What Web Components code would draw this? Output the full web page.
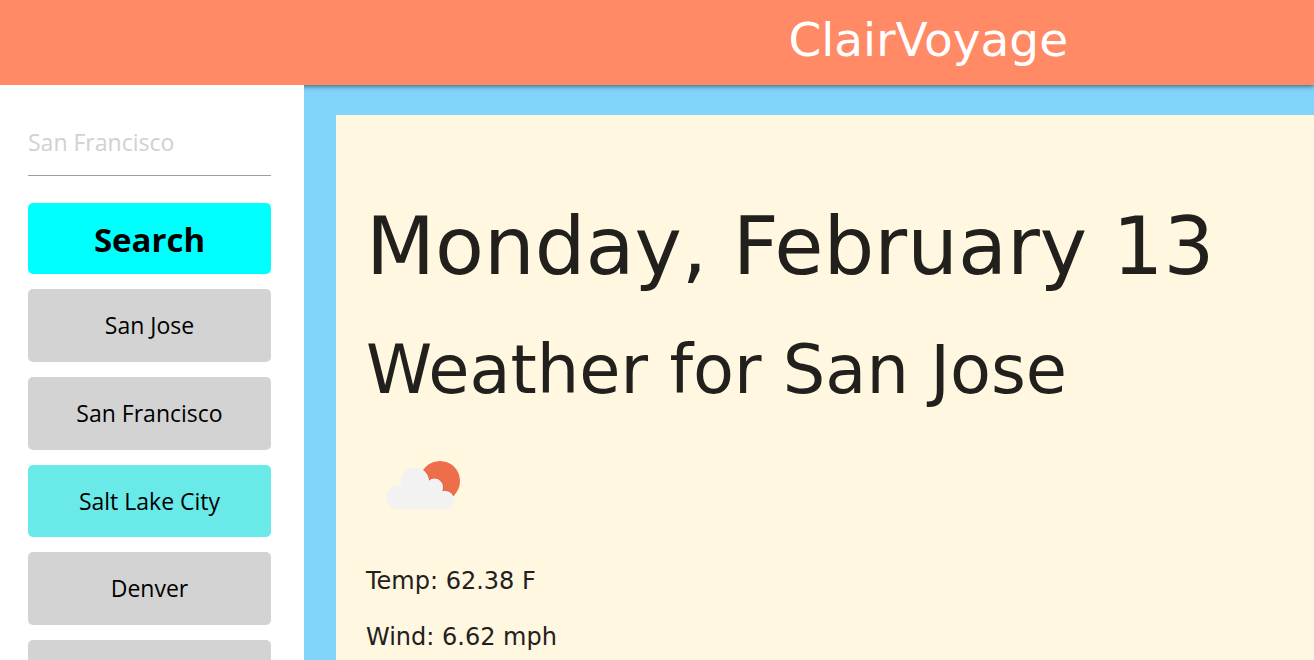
<!DOCTYPE html>
<html lang="en">
<head>
<meta charset="utf-8">
<meta name="viewport" content="width=device-width, initial-scale=1">
<title>ClairVoyage</title>
<style>
body { margin: 0; font-family: Verdana, "DejaVu Sans", sans-serif; color: #21201c; }
</style>
</head>
<body>
<voyage-app>
  <site-header slot="header">ClairVoyage</site-header>
  <city-sidebar slot="sidebar">
    <city-button>San Jose</city-button>
    <city-button>San Francisco</city-button>
    <city-button active>Salt Lake City</city-button>
    <city-button>Denver</city-button>
    <city-button label="Next city"></city-button>
  </city-sidebar>
  <weather-card>
    <span slot="date">Monday, February 13</span>
    <span slot="place">Weather for San Jose</span>
    <cloud-icon slot="icon"></cloud-icon>
    <weather-fact>Temp: 62.38 F</weather-fact>
    <weather-fact>Wind: 6.62 mph</weather-fact>
  </weather-card>
</voyage-app>
<script>
function define(name, html, setup) {
  customElements.define(name, class extends HTMLElement {
    connectedCallback() {
      if (this.shadowRoot) return;
      this.attachShadow({ mode: "open" }).innerHTML = html;
      if (setup) setup(this);
    }
  });
}

define("voyage-app", `
  <style>
    :host { display: flex; flex-direction: column; height: 100vh; overflow: hidden; }
    .body { display: grid; grid-template-columns: 304px 1fr; flex: 1; min-height: 0; }
    main { background: #81d4fa; padding: 30px 0 0 32px; display: flex; min-width: 0; min-height: 0; }
    ::slotted(weather-card) { flex: 1; }
  </style>
  <slot name="header"></slot>
  <div class="body">
    <slot name="sidebar"></slot>
    <main><slot></slot></main>
  </div>`);

define("site-header", `
  <style>
    :host { display: block; background: #ff8a65; color: #fff; padding: 8px 0 13px 60%; box-sizing: border-box;
      box-shadow: 0 2px 5px 0 rgba(0,0,0,.3), 0 1px 3px 0 rgba(0,0,0,.25); position: relative; }
    h1 { margin: 0; font-size: 47px; line-height: 64px; font-weight: 400; }
  </style>
  <header><h1><slot></slot></h1></header>`);

define("city-sidebar", `
  <style>
    :host { display: block; position: relative; background: #fff; padding: 36px 33px 0 28px; min-height: 0;
      font-family: "Segoe UI", "Open Sans", sans-serif; }
    form { display: flex; flex-direction: column; gap: 27px; margin: 0 0 15px; }
    input { display: block; width: 100%; height: 55px; box-sizing: border-box; padding: 0 0 12px; border: 0;
      border-bottom: 1px solid #9e9e9e; background: transparent; font: inherit; font-size: 23px; outline: 0; }
    input::placeholder { color: #d1d1d1; opacity: 1; }
    button { height: 71px; border: 0; border-radius: 5px; background: #0ff; color: #000; padding: 2px 0 0;
      font: inherit; font-size: 33px; font-weight: 700; }
    nav { display: flex; flex-direction: column; gap: 15px; }
  </style>
  <form>
    <input type="text" aria-label="City" placeholder="San Francisco">
    <button type="button">Search</button>
  </form>
  <nav><slot></slot></nav>`);

define("city-button", `
  <style>
    :host { display: block; }
    button { display: block; width: 100%; height: 73px; border: 0; border-radius: 5px; padding: 0 0 1px;
      background: #d3d3d3; color: #000; font: inherit; font-size: 23px; }
    :host([active]) button { background: #69eae8; height: 72px; }
  </style>
  <button type="button"><slot></slot></button>`, el => {
    const label = el.getAttribute("label");
    if (label) el.shadowRoot.querySelector("button").setAttribute("aria-label", label);
  });

define("weather-card", `
  <style>
    :host { display: block; background: #fff7e0; padding: 84px 0 0 30px; box-sizing: border-box; white-space: nowrap; }
    h2, h3 { margin: 0; font-weight: 400; }
    h2 { font-size: 80px; line-height: 96px; margin-bottom: 35px; }
    h3 { font-size: 67px; line-height: 80px; margin-bottom: 30px; }
    .facts { display: flex; flex-direction: column; gap: 20px; margin-top: 33px; }
  </style>
  <h2><slot name="date"></slot></h2>
  <h3><slot name="place"></slot></h3>
  <slot name="icon"></slot>
  <div class="facts"><slot></slot></div>`);

define("weather-fact", `
  <style>
    :host { display: block; }
    p { margin: 0; font-size: 24px; line-height: 36px; }
  </style>
  <p><slot></slot></p>`);

define("cloud-icon", `
  <style>
    :host { display: block; }
    svg { display: block; }
  </style>
  <svg width="110" height="90" viewBox="-4 0 110 90" role="img" aria-label="Few clouds">
    <defs>
      <clipPath id="sun"><circle cx="70" cy="41" r="20"/></clipPath>
    </defs>
    <circle cx="70" cy="41" r="20" fill="#ee6e4c"/>
    <g clip-path="url(#sun)" fill="#e9643f">
      <circle cx="45" cy="41.5" r="15"/><circle cx="64.5" cy="47" r="9.5"/><circle cx="75" cy="60" r="10.3"/>
    </g>
    <g fill="#f2f2f2">
      <circle cx="28.7" cy="57" r="12.3"/><circle cx="45" cy="41.5" r="14"/>
      <circle cx="64.5" cy="47" r="8.5"/><circle cx="75" cy="60" r="9.3"/>
      <path d="M28.7 69.3V50L45 41.5 64.5 42 72.5 47V53L75 60V69.3Z"/>
    </g>
  </svg>`);
</script>
</body>
</html>
